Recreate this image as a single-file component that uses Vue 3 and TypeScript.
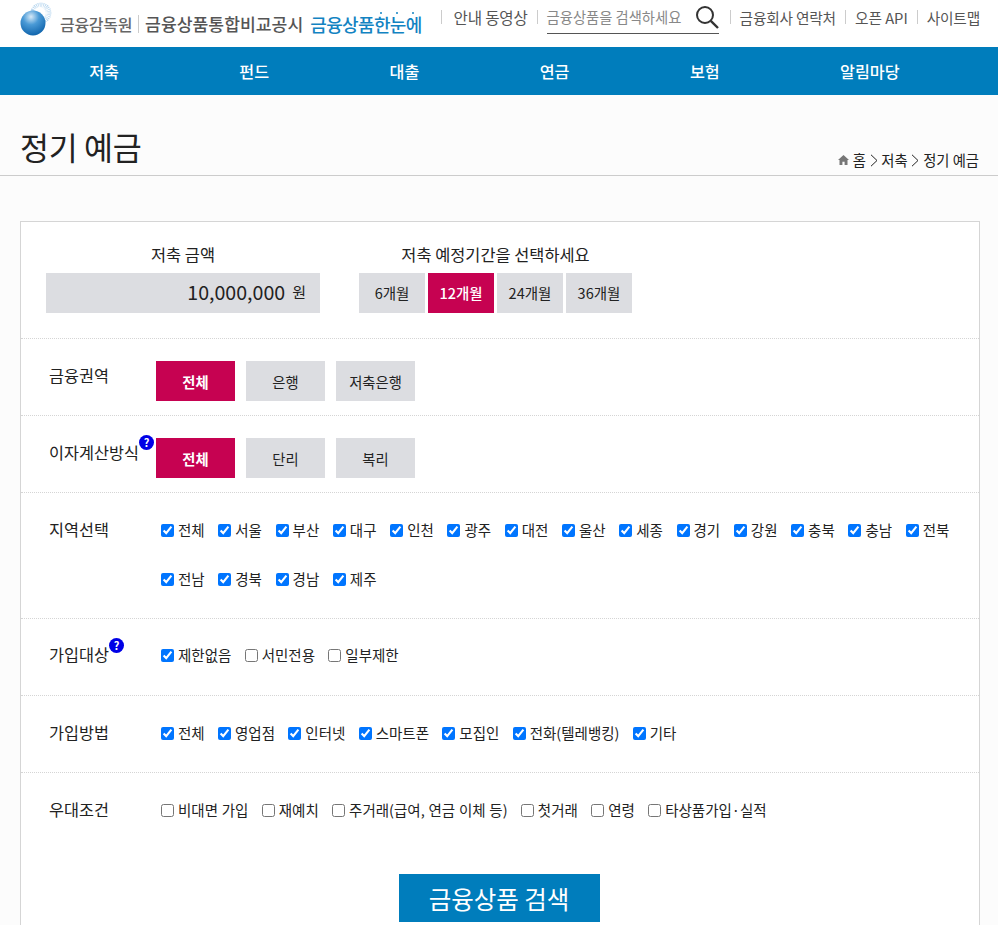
<script setup lang="ts">
interface Opt { label: string; on: boolean }
const nav: string[] = ['저축', '펀드', '대출', '연금', '보험', '알림마당']
const links: { label: string; wide?: boolean }[] = [
  { label: '금융회사 연락처' }, { label: '오픈 API', wide: true }, { label: '사이트맵' }
]
const periods: { label: string; on: boolean }[] = [
  { label: '6개월', on: false }, { label: '12개월', on: true },
  { label: '24개월', on: false }, { label: '36개월', on: false }
]
const all = (list: string[], on = true): Opt[] => list.map((label) => ({ label, on }))
const regions = all(['전체','서울','부산','대구','인천','광주','대전','울산','세종','경기','강원','충북','충남','전북','전남','경북','경남','제주'])
const targets: Opt[] = [{ label: '제한없음', on: true }, { label: '서민전용', on: false }, { label: '일부제한', on: false }]
const methods = all(['전체','영업점','인터넷','스마트폰','모집인','전화(텔레뱅킹)','기타'])
const perks = all(['비대면 가입','재예치','주거래(급여, 연금 이체 등)','첫거래','연령','타상품가입·실적'], false)
const rays: number[] = Array.from({ length: 22 }, (_, i) => i * 12 - 60)
</script>

<template>
  <div class="page">
    <header class="top">
      <div class="brand">
        <svg class="logo" width="36" height="36" viewBox="0 0 36 36">
          <defs>
            <radialGradient id="ball" cx="0.42" cy="0.25" r="0.8">
              <stop offset="0" stop-color="#d6e9f7" />
              <stop offset="0.4" stop-color="#4a9ad6" />
              <stop offset="1" stop-color="#0a5fa8" />
            </radialGradient>
          </defs>
          <circle cx="22" cy="13" r="10.5" fill="#bcd9f0" />
          <g stroke="#fff" stroke-width="0.9">
            <line v-for="r in rays" :key="r" x1="22" y1="8" x2="22" y2="2" :transform="`rotate(${r} 22 13)`" />
          </g>
          <circle cx="21" cy="13" r="6" fill="#fff" />
          <circle cx="14" cy="23" r="12.5" fill="url(#ball)" />
        </svg>
        <span class="org">금융감독원</span>
        <i class="bar tall"></i>
        <span class="site">금융상품통합비교공시</span>
        <span class="slogan">금융상품한눈에<i class="dot d1"></i><i class="dot d2"></i><i class="dot d3"></i></span>
      </div>
      <div class="util">
        <i class="bar lead"></i>
        <a class="ulink first">안내 동영상</a>
        <i class="bar"></i>
        <div class="search">
          <span>금융상품을 검색하세요</span>
          <svg width="24" height="24" viewBox="0 0 24 24" fill="none" stroke="#333" stroke-width="2">
            <circle cx="10" cy="10" r="8" />
            <line x1="15.8" y1="15.8" x2="23" y2="23" stroke-width="2.4" />
          </svg>
        </div>
        <template v-for="l in links" :key="l.label">
          <i class="bar"></i>
          <a class="ulink" :class="{ wide: l.wide }">{{ l.label }}</a>
        </template>
      </div>
    </header>

    <nav class="gnb">
      <a v-for="n in nav" :key="n">{{ n }}</a>
    </nav>

    <div class="heading">
      <h1>정기 예금</h1>
      <div class="crumbs">
        <svg class="home" width="11" height="10" viewBox="0 0 11 10" fill="#777">
          <path d="M5.5 0 11 5H9.5v5H6.6V6.7H4.4V10H1.5V5H0Z" />
        </svg>
        <span>홈</span>
        <svg width="8" height="13" viewBox="0 0 8 13" fill="none" stroke="#222"><path d="M1 .8l6 5.7-6 5.7" /></svg>
        <span>저축</span>
        <svg width="8" height="13" viewBox="0 0 8 13" fill="none" stroke="#222"><path d="M1 .8l6 5.7-6 5.7" /></svg>
        <span>정기 예금</span>
      </div>
    </div>

    <main class="panel">
      <section class="row first-row">
        <div class="amount">
          <div class="cap">저축 금액</div>
          <div class="amount-box"><b>10,000,000</b><span>원</span></div>
        </div>
        <div class="period">
          <div class="cap">저축 예정기간을 선택하세요</div>
          <div class="period-btns">
            <button v-for="p in periods" :key="p.label" class="pbtn" :class="{ on: p.on }">{{ p.label }}</button>
          </div>
        </div>
      </section>

      <section class="row btn-row">
        <div class="label">금융권역</div>
        <div class="btns">
          <button class="btn on">전체</button><button class="btn">은행</button><button class="btn">저축은행</button>
        </div>
      </section>

      <section class="row btn-row">
        <div class="label">이자계산방식<em class="help">?</em></div>
        <div class="btns">
          <button class="btn on">전체</button><button class="btn">단리</button><button class="btn">복리</button>
        </div>
      </section>

      <section class="row check-row region">
        <div class="label">지역선택</div>
        <div class="checks region-checks">
          <label v-for="o in regions" :key="o.label"><input type="checkbox" :checked="o.on" />{{ o.label }}</label>
        </div>
      </section>

      <section class="row check-row target">
        <div class="label">가입대상<em class="help near">?</em></div>
        <div class="checks">
          <label v-for="o in targets" :key="o.label"><input type="checkbox" :checked="o.on" />{{ o.label }}</label>
        </div>
      </section>

      <section class="row check-row">
        <div class="label">가입방법</div>
        <div class="checks">
          <label v-for="o in methods" :key="o.label"><input type="checkbox" :checked="o.on" />{{ o.label }}</label>
        </div>
      </section>

      <section class="row check-row last">
        <div class="label">우대조건</div>
        <div class="checks">
          <label v-for="o in perks" :key="o.label"><input type="checkbox" :checked="o.on" />{{ o.label }}</label>
        </div>
      </section>

      <div class="submit"><button>금융상품 검색</button></div>
    </main>
  </div>
</template>

<style>
html, body { margin: 0; padding: 0; background: #fcfcfc; overflow: hidden; }
</style>

<style scoped>
.page {
  width: 998px;
  height: 925px;
  overflow: hidden;
  font-family: "Noto Sans CJK KR", "Noto Sans", sans-serif;
  color: #222;
  font-size: 14px;
  background: #fcfcfc;
}
.top {
  height: 47px;
  background: #fff;
  display: flex;
  justify-content: space-between;
  padding: 0 18px 0 19px;
  box-sizing: border-box;
}
.brand { display: flex; align-items: center; height: 47px; }
.logo { margin-top: -11px; margin-right: 5px; }
.org { font-size: 16px; font-weight: 500; color: #666; letter-spacing: -0.3px; }
.site { font-size: 17.2px; font-weight: 500; color: #555; }
.slogan { position: relative; font-size: 18px; font-weight: 500; color: #1383c2; letter-spacing: -0.65px; margin-left: 7px; }
.dot { position: absolute; top: 1px; width: 2px; height: 2px; border-radius: 50%; background: #1383c2; }
.d1 { left: 70px; }
.d2 { left: 86px; }
.d3 { left: 102px; }
.bar { display: block; width: 1px; height: 14px; background: #ccc; flex: none; }
.bar.tall { height: 18px; margin: 0 6px; }
.bar.lead { margin-right: 3px; }
.util { display: flex; align-items: center; gap: 9px; height: 34px; }
.ulink { font-size: 14.7px; color: #555; letter-spacing: -0.2px; white-space: nowrap; }
.ulink.first { font-size: 15.6px; }
.ulink.wide { letter-spacing: 0; }
.search {
  width: 172px;
  height: 34px;
  box-sizing: border-box;
  margin-right: 2px;
  border-bottom: 1px solid #555;
  display: flex;
  align-items: center;
  justify-content: space-between;
  color: #888;
  font-size: 14.3px;
}
.gnb {
  height: 48px;
  box-sizing: border-box;
  padding-bottom: 1px;
  background: #007dbc;
  display: flex;
  padding-left: 29px;
  align-items: center;
}
.gnb a { padding: 0 60.2px; font-size: 16.2px; font-weight: 500; color: #fff; }
.heading {
  height: 81px;
  box-sizing: border-box;
  border-bottom: 1px solid #ccc;
  padding: 0 19px 0 20px;
  display: flex;
  justify-content: space-between;
  align-items: flex-end;
}
h1 { margin: 0 0 6px; font-size: 31.5px; font-weight: 400; color: #222; line-height: 46px; letter-spacing: -0.3px; }
.crumbs { display: flex; align-items: center; gap: 3.75px; font-size: 14.3px; line-height: 20px; margin-bottom: 5px; }
.panel {
  margin: 45px 18px 0 20px;
  border: 1px solid #d5d5d5;
  background: #fff;
  height: 760px;
}
.row { box-sizing: border-box; border-bottom: 1px dotted #d5d5d5; margin: 0; display: flex; }
.first-row { height: 117px; padding: 20px 0 0 25px; gap: 39px; }
.cap { font-size: 16.4px; text-align: center; line-height: 24px; margin-bottom: 7px; }
.amount { width: 274px; }
.amount-box {
  height: 40px;
  box-sizing: border-box;
  padding-bottom: 3px;
  background: #dcdde1;
  display: flex;
  align-items: center;
  justify-content: flex-end;
  padding-right: 14px;
  gap: 7px;
}
.amount-box b { font-size: 19.6px; font-weight: 400; }
.amount-box span { font-size: 15px; }
.period-btns { display: flex; gap: 3px; }
.pbtn, .btn {
  border: 0;
  background: #dcdde1;
  color: #222;
  font: inherit;
  padding: 0;
  height: 40px;
}
.pbtn { width: 66px; font-size: 14.5px; padding-bottom: 2px; }
.pbtn.on, .btn.on { background: #c60251; color: #fff; }
.pbtn.on { font-weight: 500; }
.btn.on { font-weight: 700; }
.btn-row { height: 77px; padding: 22px 0 0 28px; }
.label { width: 107px; font-size: 16.3px; line-height: 29px; flex: none; position: relative; }
.btn-row .label { line-height: 29px; }
.btns { display: flex; gap: 11px; }
.btn { width: 79px; font-size: 14.3px; }
.help {
  position: absolute;
  left: 90px;
  top: -3px;
  width: 15px;
  height: 15px;
  border-radius: 50%;
  background: #0000e6;
  color: #fff;
  font-size: 11px;
  font-weight: 700;
  font-style: normal;
  line-height: 15px;
  text-align: center;
}
.help.near { left: 60px; top: -2px; }
.check-row { height: 77px; padding: 22px 0 0 28px; }
.check-row.target { padding-top: 21px; }
.region { height: 126px; }
.last { border-bottom: 0; height: 79px; }
.checks { display: flex; flex-wrap: wrap; align-self: flex-start; column-gap: 13.3px; row-gap: 25px; margin-left: 5px; width: 800px; padding-top: 3px; word-spacing: 0.5px; }
.checks.region-checks { column-gap: 13.6px; }
.checks label { display: flex; align-items: center; gap: 4px; font-size: 14.5px; line-height: 24px; white-space: nowrap; }
.checks input { margin: 0; width: 13px; height: 13px; }
.submit { display: flex; justify-content: center; padding: 22px 2px 0 0; }
.submit button {
  width: 201px;
  height: 48px;
  border: 0;
  background: #007dbc;
  color: #fff;
  font: inherit;
  font-size: 24.5px;
  padding: 0;
}
</style>
